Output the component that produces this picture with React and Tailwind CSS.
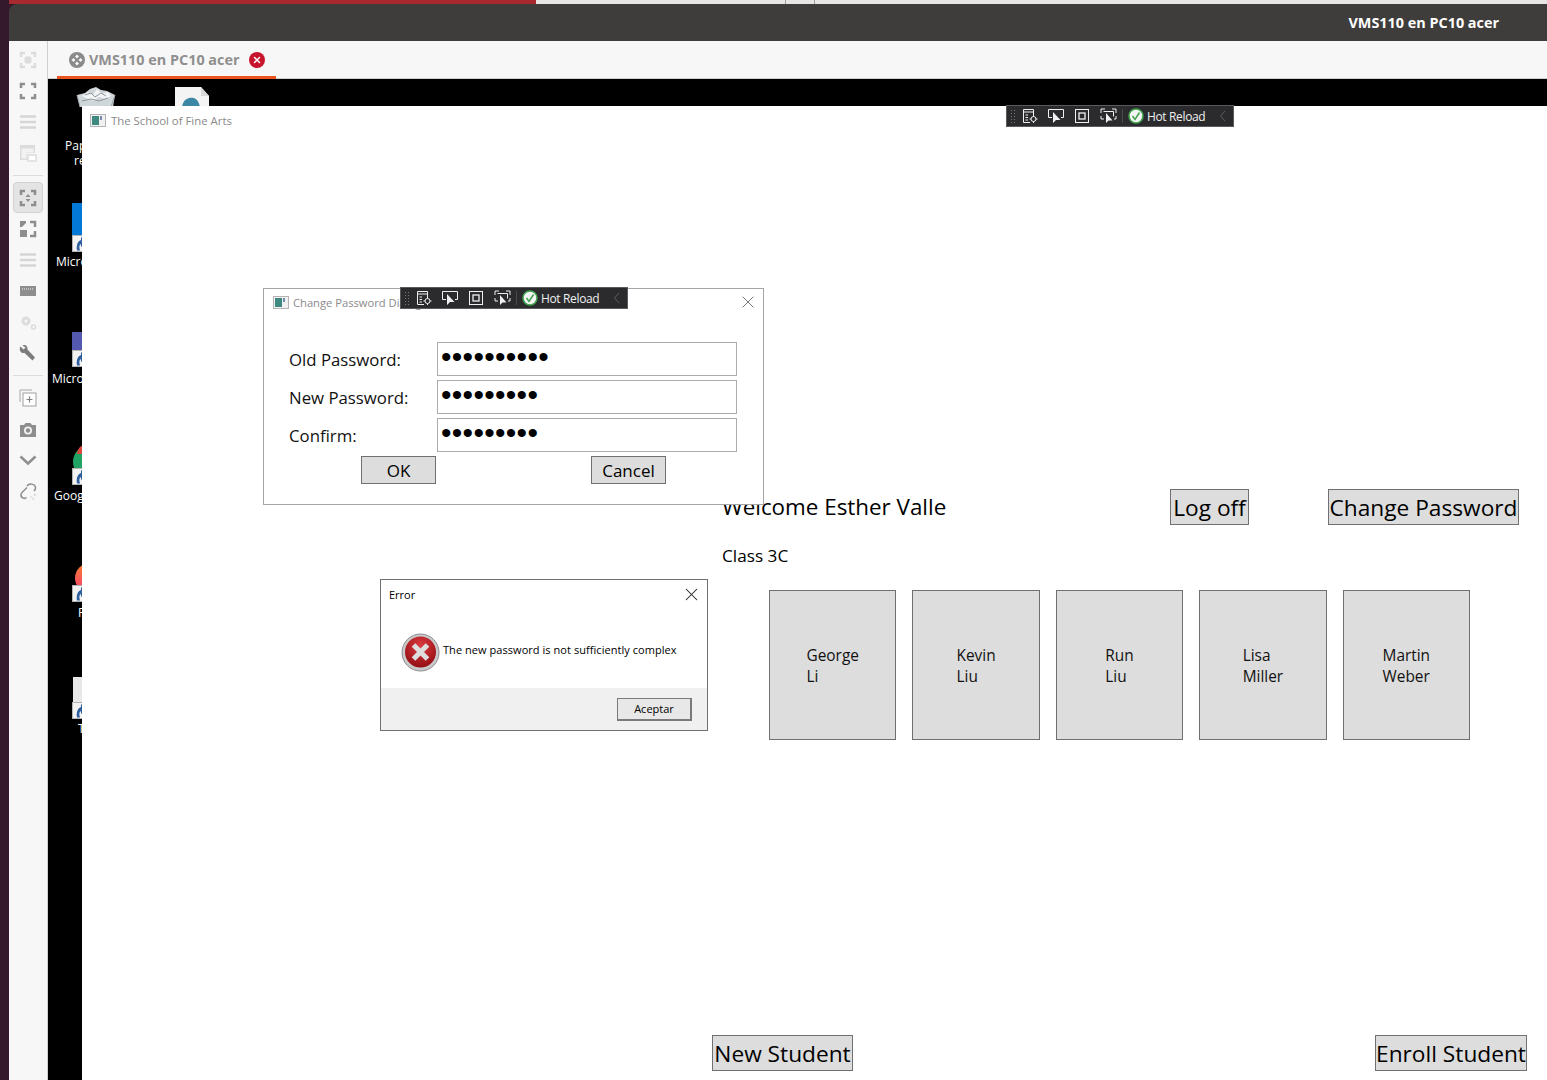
import { X } from 'lucide-react';

const students = [
  ['George', 'Li'],
  ['Kevin', 'Liu'],
  ['Run', 'Liu'],
  ['Lisa', 'Miller'],
  ['Martin', 'Weber'],
];

const SideIcon = ({ children, active }) => (
  <div className={`w-[30px] h-[31px] flex items-center justify-center ${active ? 'bg-[#e4e4e4] border border-[#d2d2d2] rounded-[4px]' : ''}`}>
    <svg width="18" height="18" viewBox="0 0 18 18" fill="none">{children}</svg>
  </div>
);

const Corners = ({ color }) => (
  <path d="M2 6V2h4M12 2h4v4M16 12v4h-4M6 16H2v-4" stroke={color} strokeWidth="2.500" />
);

const Sidebar = () => (
  <div className="w-[39px] shrink-0 bg-[#f7f7f7] border-r border-[#cfcfcf] flex flex-col items-center pt-[3px]">
    <SideIcon>
      <Corners color="#dcdcdc" />
      <rect x="5.500" y="5.500" width="7" height="7" rx="2" fill="#dcdcdc" />
    </SideIcon>
    <SideIcon><Corners color="#8e8e8e" /></SideIcon>
    <SideIcon>
      <path d="M1 3.500h16M1 9h16M1 14.500h16" stroke="#d6d6d6" strokeWidth="2.500" />
    </SideIcon>
    <SideIcon>
      <path d="M1 16V1h15v8H8v7z" fill="#dcdcdc" />
      <path d="M2.500 4.500h12v4H7.500v6h-5z" fill="#f2f2f2" />
      <rect x="9" y="11" width="8" height="6" fill="#fff" stroke="#dcdcdc" strokeWidth="1.500" />
    </SideIcon>
    <div className="w-[30px] h-px bg-[#dcdcdc] mt-[7px] mb-[6px]" />
    <SideIcon active>
      <Corners color="#8e8e8e" />
      <path d="M9 5l2.500 3h-5zM9 13l-2.500-3h5z" fill="#8e8e8e" />
    </SideIcon>
    <SideIcon>
      <path d="M1 1h6v2L3 7H1z" fill="#8e8e8e" />
      <path d="M11 2h5v5M16 11v5h-5" stroke="#8e8e8e" strokeWidth="2.500" />
      <rect x="1" y="10" width="7" height="7" fill="#8e8e8e" />
    </SideIcon>
    <SideIcon>
      <path d="M1 3.500h16M1 9h16M1 14.500h16" stroke="#d6d6d6" strokeWidth="2.500" />
    </SideIcon>
    <SideIcon>
      <rect x="1" y="4" width="16" height="10" fill="#8e8e8e" />
      <path d="M3 7h12" stroke="#f2f2f2" strokeWidth="1" strokeDasharray="1 1" />
    </SideIcon>
    <SideIcon>
      <circle cx="7" cy="8" r="4.500" fill="#dcdcdc" />
      <circle cx="7" cy="8" r="1.500" fill="#f7f7f7" />
      <circle cx="14.500" cy="14" r="2" stroke="#dcdcdc" strokeWidth="1.500" />
    </SideIcon>
    <SideIcon>
      <path d="M1.500 2.500l3 3 2-2-3-2c3-1.500 5.500 1 5 4l7.500 8-2.500 3-8-7.500c-3 .5-5.500-2-4.500-5.500z" fill="#7c7c7c" />
    </SideIcon>
    <div className="w-[30px] h-px bg-[#dcdcdc] mt-[7px] mb-[6px]" />
    <SideIcon>
      <path d="M1 13V1h12" stroke="#a8a8a8" strokeWidth="1" />
      <rect x="4" y="4" width="13" height="13" fill="#fff" stroke="#a0a0a0" strokeWidth="1" />
      <path d="M10.500 7.500v6M7.500 10.500h6" stroke="#808080" strokeWidth="1.200" />
    </SideIcon>
    <SideIcon>
      <path d="M1 5h4l1.500-2h5L13 5h4v12H1z" fill="#8e8e8e" />
      <circle cx="9" cy="10.500" r="4" fill="#f2f2f2" />
      <circle cx="9" cy="10.500" r="2.200" fill="#8e8e8e" />
    </SideIcon>
    <SideIcon>
      <path d="M1.500 5.500L9 12.500l7.500-7" stroke="#8e8e8e" strokeWidth="2.500" />
    </SideIcon>
    <SideIcon>
      <path d="M7.500 15.500c-2 2-6 0-5.500-3 .2-1 .8-1.800 1.500-2.500L8 5.500" stroke="#8e8e8e" strokeWidth="1.500" />
      <path d="M8 4c2-3 8-2.500 8.500 1.500.2 1.500-.5 2.500-1.500 3.500" stroke="#8e8e8e" strokeWidth="1.500" />
      <path d="M12 14.500l1 1M15 12.500l1.500.5M14 16.500l.5 1" stroke="#a8a8a8" strokeWidth="1" />
    </SideIcon>
  </div>
);

const Shortcut = ({ className }) => (
  <div className={`absolute left-[72px] w-[16px] h-[17px] bg-[#f2f2f2] border border-[#b4b4b4] flex items-center justify-center ${className}`}>
    <svg width="13" height="14" viewBox="0 0 13 14">
      <path d="M3 13.500C2 8 4 4 7 3V0l6 5-6 5V7C5 8 5 10 6 13.500z" fill="#2f5f9e" />
    </svg>
  </div>
);

const DeskLabel = ({ className, children }) => (
  <span className={`absolute text-white text-[12px] leading-[15px] font-['Open_Sans',sans-serif] ${className}`}>{children}</span>
);

const Desktop = () => (
  <>
    {/* recycle bin and file above the app window */}
    <svg className="absolute left-[76px] top-[87px]" width="40" height="20" viewBox="0 0 40 20">
      <path d="M1 8L9 6l5-4 6-2 5 3 6 1 8 4-2 12H4z" fill="#cfd6d9" />
      <path d="M6 9l6-4 5 3 4-6 5 5 6-2 3 4-5 3-7-2-6 4-7-3z" fill="#f1f3f4" />
      <path d="M9 8l6-2 4 4 6-4 5 3M6 14l9-2 8 2 9-3" stroke="#8d979c" strokeWidth="1" fill="none" />
      <path d="M4 20l-3-12M35 20l4-12" stroke="#9aa3a8" strokeWidth="1" />
    </svg>
    <svg className="absolute left-[174px] top-[87px]" width="36" height="20" viewBox="0 0 36 20">
      <path d="M1 0h26l8 9v11H1z" fill="#f4f4f4" />
      <path d="M27 0v9h8z" fill="#d8d8d8" />
      <path d="M8 20c1-8 7-10 12-9 3 1 5 4 6 9z" fill="#3b87a5" />
    </svg>
    <DeskLabel className="left-[65px] top-[138px]">Papelera</DeskLabel>
    <DeskLabel className="left-[74px] top-[153px]">reciclaje</DeskLabel>

    <div className="absolute left-[72px] top-[203px] w-[32px] h-[32px] bg-[#0478d7]" />
    <Shortcut className="top-[235px]" />
    <DeskLabel className="left-[56px] top-[254px]">Microsoft</DeskLabel>

    <div className="absolute left-[72px] top-[332px] w-[32px] h-[18px] bg-[#5558af]" />
    <Shortcut className="top-[350px]" />
    <DeskLabel className="left-[52px] top-[371px]">Microsoft</DeskLabel>

    <div className="absolute left-[73px] top-[445px] w-[34px] h-[34px] rounded-full bg-[#1fa463]" />
    <div className="absolute left-[77px] top-[444px] w-[12px] h-[10px] rounded-tl-full bg-[#d8483a]" />
    <Shortcut className="top-[468px]" />
    <DeskLabel className="left-[54px] top-[488px]">Google</DeskLabel>

    <div className="absolute left-[75px] top-[563px] w-[30px] h-[30px] rounded-full bg-gradient-to-b from-[#f97a16] to-[#f6366f]" />
    <Shortcut className="top-[585px]" />
    <DeskLabel className="left-[78px] top-[605px]">Firefox</DeskLabel>

    <div className="absolute left-[73px] top-[677px] w-[20px] h-[26px] bg-[#e8e8e8]" />
    <Shortcut className="top-[702px]" />
    <DeskLabel className="left-[78px] top-[721px]">Teams</DeskLabel>
  </>
);

const WindowIcon = () => (
  <svg width="16" height="13" viewBox="0 0 16 13" className="shrink-0">
    <rect x="0.500" y="0.500" width="15" height="12" fill="#f1f1f1" stroke="#b4b4b4" />
    <rect x="2" y="2" width="7" height="9" fill="#3f8a80" />
    <rect x="10" y="2" width="2" height="4" fill="#6f8fa8" />
  </svg>
);

const HotReload = ({ className }) => (
  <div className={`absolute w-[228px] h-[22px] bg-[#2b2b2e] border border-[#5a5a5e] flex items-center text-[#f0f0f0] ${className}`}>
    <div className="w-[6px] h-[14px] ml-[3px] bg-[radial-gradient(#77777a_1px,transparent_1px)] bg-[length:3px_3px]" />
    <svg className="ml-[6px]" width="16" height="16" viewBox="0 0 16 16" fill="none" stroke="#f0f0f0" strokeWidth="1">
      <path d="M8 14.500H1.500v-13h10V7M1.500 4h10M3.500 7H6M3.500 9.500H6M3.500 12H6" />
      <circle cx="11.500" cy="11" r="2.500" />
      <path d="M11.500 7v1.500M11.500 13.500V15M7.500 11H9M14 11h1.500" />
    </svg>
    <svg className="ml-[10px]" width="16" height="16" viewBox="0 0 16 16" fill="none">
      <path d="M4 9.500H.5V1.500h15v8H13" stroke="#f0f0f0" />
      <path d="M5 4v11l3-3h4.500z" fill="#f0f0f0" />
    </svg>
    <svg className="ml-[10px]" width="16" height="16" viewBox="0 0 16 16" fill="none" stroke="#f0f0f0">
      <rect x="1.500" y="1.500" width="13" height="13" />
      <rect x="5" y="5" width="6" height="6" strokeWidth="1.300" />
    </svg>
    <svg className="ml-[10px]" width="17" height="16" viewBox="0 0 17 16" fill="none">
      <path d="M1 5V1h4M12 1h4v4M1 8v3h3M16 8v3h-2M3.500 3.500h10v5" stroke="#f0f0f0" />
      <path d="M6 5v10l2.500-2.500h4z" fill="#f0f0f0" />
    </svg>
    <div className="w-px h-[14px] bg-[#4a4a4e] ml-[5px]" />
    <svg className="ml-[5px]" width="16" height="16" viewBox="0 0 16 16" fill="none">
      <circle cx="8" cy="8" r="7" fill="#f4f4f4" stroke="#3fa34d" strokeWidth="1.500" />
      <path d="M4.500 8l2.500 3.500L11.500 4.500" stroke="#3fa34d" strokeWidth="1.500" />
    </svg>
    <span className="ml-[3px] mt-[1px] text-[12px] font-['Open_Sans',sans-serif] tracking-[-0.35px] whitespace-nowrap">Hot Reload</span>
    <svg className="ml-[14px]" width="8" height="12" viewBox="0 0 8 12" fill="none">
      <path d="M6 1L1.500 6 6 11" stroke="#5f5f63" />
    </svg>
  </div>
);

const WpfButton = ({ className, children }) => (
  <div className={`bg-[#dddddd] border border-[#707070] flex items-center justify-center text-black whitespace-nowrap ${className}`}>
    {children}
  </div>
);

const PasswordRow = ({ label, length }) => (
  <div className="flex h-[34px] items-center">
    <span className="w-[173px] pl-[25px] pt-[1px] text-[16.8px] text-[#111] whitespace-nowrap">{label}</span>
    <div className="w-[300px] h-full border border-[#ababab] bg-white pl-[3px] text-[30px] leading-[27px] tracking-[0.3px] font-['Liberation_Sans',sans-serif] text-black">
      {'•'.repeat(length)}
    </div>
  </div>
);

const ChangePasswordDialog = () => (
  <div className="absolute left-[263px] top-[288px] w-[501px] h-[217px] bg-white border border-[#a5a5a5] font-['Open_Sans',sans-serif]">
    <div className="h-[53px] flex items-start pl-[9px] pt-[7px] gap-[4px] relative">
      <WindowIcon />
      <span className="text-[11.2px] leading-[14px] text-[#8a8a8a] whitespace-nowrap">Change Password Dialog</span>
      <X className="absolute right-[5px] top-[3px] text-[#666]" size={20} strokeWidth={1.100} />
    </div>
    <div className="flex flex-col gap-[4px]">
      <PasswordRow label="Old Password:" length={10} />
      <PasswordRow label="New Password:" length={9} />
      <PasswordRow label="Confirm:" length={9} />
    </div>
    <div className="flex mt-[4px] pl-[97px] gap-[155px]">
      <WpfButton className="w-[75px] h-[28px] text-[17px] pt-[1px]">OK</WpfButton>
      <WpfButton className="w-[75px] h-[28px] text-[17px] pt-[1px]">Cancel</WpfButton>
    </div>
  </div>
);

const ErrorDialog = () => (
  <div className="absolute left-[380px] top-[579px] w-[328px] h-[152px] bg-white border border-[#707070] flex flex-col font-['Open_Sans',sans-serif] text-black">
    <div className="h-[30px] flex items-center justify-between pl-[8px] pr-[5px] pt-[1px]">
      <span className="text-[11px]">Error</span>
      <X size={21} strokeWidth={1.200} className="text-[#222] -mt-[3px]" />
    </div>
    <div className="flex-1 flex items-start pl-[20px] pt-[23px] gap-[3px]">
      <svg className="shrink-0" width="39" height="39" viewBox="0 0 39 39">
        <defs>
          <radialGradient id="errFill" cx="50%" cy="30%" r="75%">
            <stop offset="0%" stopColor="#dc3b40" />
            <stop offset="100%" stopColor="#8e0b10" />
          </radialGradient>
        </defs>
        <circle cx="19.500" cy="19.500" r="18.500" fill="#c9c9c9" stroke="#8d8d8d" />
        <circle cx="19.500" cy="19" r="15.500" fill="url(#errFill)" />
        <path d="M12.500 12l14 14M26.500 12l-14 14" stroke="#dedede" strokeWidth="5" />
      </svg>
      <span className="text-[11px] leading-[14px] mt-[10px] tracking-[0.05px] whitespace-nowrap">The new password is not sufficiently complex</span>
    </div>
    <div className="h-[42px] bg-[#f0f0f0] flex justify-end pr-[15px] pt-[10px]">
      <div className="w-[75px] h-[23px] bg-[#e8e8e8] border border-[#7a7a7a] border-r-2 border-b-2 flex items-center justify-center text-[11px]">Aceptar</div>
    </div>
  </div>
);

const AppWindow = () => (
  <div className="absolute left-[82px] top-[106px] w-[1465px] h-[974px] bg-white flex flex-col font-['Open_Sans',sans-serif] text-black">
    <div className="h-[28px] flex items-center pl-[8px] gap-[5px] pt-[1px]">
      <WindowIcon />
      <span className="text-[11.4px] text-[#8a8a8a] pt-[1px]">The School of Fine Arts</span>
    </div>
    <div className="pt-[355px] pl-[640px] flex items-start">
      <span className="w-[448px] text-[22.4px] leading-[36px]">Welcome Esther Valle</span>
      <WpfButton className="w-[79px] h-[36px] text-[22.7px] pt-[3px]">Log off</WpfButton>
      <WpfButton className="w-[191px] h-[36px] text-[22.7px] ml-[79px] pt-[3px]">Change Password</WpfButton>
    </div>
    <div className="pl-[640px] mt-[18px] text-[17.2px] leading-[26px]">Class 3C</div>
    <div className="ml-[687px] mt-[21px] w-[701px] grid grid-cols-5 gap-4">
      {students.map(([first, last]) => (
        <div key={first + last} className="h-[150px] bg-[#dddddd] border border-[#707070] flex items-center justify-center pt-[2px] text-[15.4px] leading-[21px] text-[#111]">
          <div>
            {first}
            <br />
            {last}
          </div>
        </div>
      ))}
    </div>
    <div className="mt-auto mb-[9px] ml-[630px] mr-[20px] flex justify-between">
      <WpfButton className="w-[141px] h-[36px] text-[22.7px] pt-[3px]">New Student</WpfButton>
      <WpfButton className="w-[152px] h-[36px] text-[22.7px] pt-[3px]">Enroll Student</WpfButton>
    </div>
  </div>
);

export default function App() {
  return (
    <div className="relative w-[1547px] h-[1080px] overflow-hidden flex bg-[#34192c]">
      <div className="w-[9px] shrink-0" />
      <div className="flex-1 flex flex-col min-w-0">
        <div className="h-[4px] flex">
          <div className="w-[527px] bg-[#a62a2e]" />
          <div className="flex-1 bg-[#e6e6e6] flex">
            <div className="w-[250px] border-r border-[#a0a0a0]" />
            <div className="w-[29px] border-r border-[#a0a0a0]" />
          </div>
        </div>
        <div className="h-[37px] bg-[#3e3d3b] rounded-tl-[8px] flex items-center justify-end pr-[48px] text-white text-[14.4px] font-bold font-['Open_Sans',sans-serif]">
          VMS110 en PC10 acer
        </div>
        <div className="flex-1 flex min-h-0">
          <Sidebar />
          <div className="flex-1 flex flex-col bg-black">
            <div className="h-[38px] bg-[#f7f7f7] border-b border-[#cfcfcf] pl-[9px] flex">
              <div className="w-[219px] h-[38px] border-b-[3px] border-[#e95420] flex items-center pl-[12px] pt-[3px]">
                <svg width="16" height="16" viewBox="0 0 16 16">
                  <circle cx="8" cy="8" r="8" fill="#8a8a8a" />
                  <path d="M8 2.500L10 4.500 8 6.500 6 4.500zM8 9.500l2 2-2 2-2-2zM4.500 6l2 2-2 2-2-2zM11.500 6l2 2-2 2-2-2z" fill="#f7f7f7" />
                </svg>
                <span className="ml-[4px] text-[14.4px] font-bold text-[#8f8f8f] font-['Open_Sans',sans-serif] whitespace-nowrap">VMS110 en PC10 acer</span>
                <div className="ml-[9px] w-[16px] h-[16px] rounded-full bg-[#c7162b] flex items-center justify-center">
                  <X size={10} strokeWidth={3.500} className="text-white" />
                </div>
              </div>
            </div>
          </div>
        </div>
      </div>
      <Desktop />
      <AppWindow />
      <HotReload className="left-[1006px] top-[105px]" />
      <ChangePasswordDialog />
      <HotReload className="left-[400px] top-[287px]" />
      <ErrorDialog />
    </div>
  );
}
